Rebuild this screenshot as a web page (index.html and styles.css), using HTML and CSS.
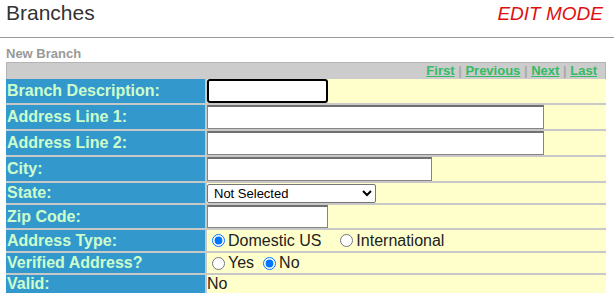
FILE: index.html
```html
<!DOCTYPE html>
<html lang="en">
<head>
  <meta charset="UTF-8">
  <title>Branches</title>
  <link rel="stylesheet" href="styles.css">
</head>
<body>
<div id="header">
  <h1>Branches</h1>
  <span class="mode">EDIT MODE</span>
</div>
<div id="content">
  <div class="caption">New Branch</div>
  <div id="form">
    <div class="nav">
      <a href="#">First</a> | <a href="#">Previous</a> | <a href="#">Next</a> | <a href="#">Last</a>
    </div>
    <div class="row h24">
      <div class="label">Branch Description:</div>
      <div class="value"><input type="text" class="short focus"></div>
    </div>
    <div class="row h24">
      <div class="label">Address Line 1:</div>
      <div class="value"><input type="text" class="long"></div>
    </div>
    <div class="row h24">
      <div class="label">Address Line 2:</div>
      <div class="value"><input type="text" class="long"></div>
    </div>
    <div class="row h24">
      <div class="label">City:</div>
      <div class="value"><input type="text" class="mid"></div>
    </div>
    <div class="row h20">
      <div class="label">State:</div>
      <div class="value">
        <select>
          <option>Not Selected</option>
        </select>
      </div>
    </div>
    <div class="row h23">
      <div class="label">Zip Code:</div>
      <div class="value"><input type="text" class="short"></div>
    </div>
    <div class="row h21">
      <div class="label">Address Type:</div>
      <div class="value">
        <label><input type="radio" name="type" checked>Domestic US</label>
        <label class="gap"><input type="radio" name="type">International</label>
      </div>
    </div>
    <div class="row h20">
      <div class="label">Verified Address?</div>
      <div class="value">
        <label><input type="radio" name="verified">Yes</label>
        <label><input type="radio" name="verified" checked>No</label>
      </div>
    </div>
    <div class="row h18 last">
      <div class="label">Valid:</div>
      <div class="value">No</div>
    </div>
  </div>
</div>
</body>
</html>
```

FILE: styles.css
```css
* {
  margin: 0;
  padding: 0;
}

body {
  font-family: "Liberation Sans", Arial, sans-serif;
  background: #fff;
}

#header {
  display: flex;
  justify-content: space-between;
  align-items: baseline;
  box-sizing: border-box;
  height: 38px;
  padding: 1px 11px 0 6px;
  border-bottom: 1px solid #999;
  line-height: 24px;
}

#header h1 {
  font-size: 21px;
  font-weight: normal;
  color: #333;
}

.mode {
  font-size: 19px;
  font-style: italic;
  color: #dd1111;
}

#content {
  padding: 0 6px;
}

.caption {
  font-size: 13px;
  font-weight: bold;
  color: #999;
  line-height: 15px;
  margin: 8px 0 1px;
}

#form {
  width: 600px;
}

.nav {
  box-sizing: border-box;
  height: 17px;
  line-height: 16px;
  background: #cccccc;
  border: 1px solid #b4b4b4;
  border-bottom: 0;
  text-align: right;
  font-size: 13px;
  font-weight: bold;
  color: #a8a8a8;
  padding-right: 8px;
}

.nav a {
  color: #33bb66;
}

.row {
  display: grid;
  grid-template-columns: 201px 1fr;
  border-bottom: 2px solid #c8c8c8;
}

.row.last {
  border-bottom: 0;
}

.h24 { height: 24px; }
.h23 { height: 23px; }
.h21 { height: 21px; }
.h20 { height: 20px; }
.h18 { height: 18px; }

.label {
  display: flex;
  align-items: center;
  background: #3399cc;
  color: #ccffcc;
  font-size: 16px;
  font-weight: bold;
  padding-left: 1px;
  border-right: 2px solid #c8c8c8;
}

.value {
  display: flex;
  align-items: center;
  background: #ffffcc;
  font-size: 16px;
  color: #222;
}

input[type=text] {
  display: block;
  height: 24px;
  box-sizing: border-box;
  border: 1px solid #858585;
  border-top: 2px solid #707070;
  background: #fff;
}

.h23 input[type=text] {
  height: 23px;
}

input.focus {
  border: 2px solid #000;
  border-radius: 3px;
}

.short {
  width: 121px;
}

.mid {
  width: 225px;
}

.long {
  width: 337px;
}

select {
  width: 169px;
  height: 19px;
  font-size: 13px;
  font-family: "Liberation Sans", Arial, sans-serif;
  color: #000;
  background: #fff;
  border: 1px solid #767676;
  border-radius: 2px;
  padding-left: 2px;
}

label {
  display: inline-flex;
  align-items: center;
  font-size: 16px;
  color: #222;
}

label input {
  width: 13px;
  height: 13px;
  margin: 0 3px 0 5px;
}

label + label {
  margin-left: 4px;
}

label.gap {
  margin-left: 14px;
}
```
